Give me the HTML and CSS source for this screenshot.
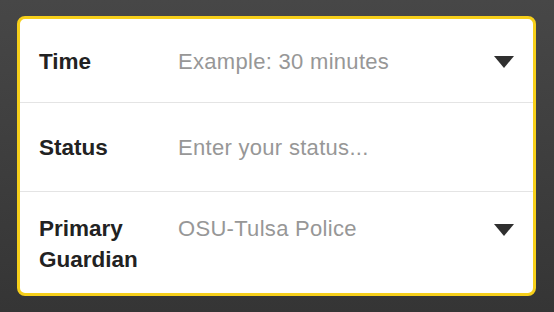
FILE: index.html
```html
<!DOCTYPE html>
<html>
<head>
	<meta charset="utf-8">
	<title>Check In</title>
	<link rel="stylesheet" href="styles.css">
</head>
<body>
	<div class="screen">
		<div class="card">
			<div class="row row-time">
				<span class="label">Time</span>
				<span class="value">Example: 30 minutes</span>
				<svg class="arrow" width="20" height="12" viewBox="0 0 20 12"><polygon points="0,0 20,0 10,12" fill="#2f2f2f"/></svg>
			</div>
			<div class="row row-status">
				<span class="label">Status</span>
				<span class="value">Enter your status...</span>
			</div>
			<div class="row row-guardian">
				<span class="label">Primary<br>Guardian</span>
				<span class="value">OSU-Tulsa Police</span>
				<svg class="arrow" width="20" height="12" viewBox="0 0 20 12"><polygon points="0,0 20,0 10,12" fill="#2f2f2f"/></svg>
			</div>
		</div>
	</div>
</body>
</html>
```

FILE: styles.css
```css
html, body{
	margin: 0;
	padding: 0;
}
body{
	width: 554px;
	height: 312px;
	overflow: hidden;
	font-family: "Liberation Sans", Arial, sans-serif;
}
.screen{
	width: 554px;
	height: 312px;
	padding: 16px 0 0 17px;
	box-sizing: border-box;
	background: linear-gradient(to bottom, #474747, #353535);
}
.card{
	width: 519px;
	height: 280px;
	box-sizing: border-box;
	background: #fff;
	border: 3px solid #f6cf1a;
	border-radius: 8px;
	overflow: hidden;
}
.row{
	display: flex;
	align-items: center;
	box-sizing: border-box;
	padding: 2px 19px 0;
	border-bottom: 1px solid #e4e4e4;
	line-height: 30px;
	font-size: 22px;
}
.row-time{
	height: 84px;
}
.row-status{
	height: 89px;
}
.row-guardian{
	border-bottom: none;
	align-items: flex-start;
	padding-top: 21px;
	line-height: 31px;
}
.label{
	width: 139px;
	flex: none;
	font-weight: bold;
	font-size: 22.5px;
	color: #222;
}
.value{
	flex: 1;
	color: #979797;
	letter-spacing: 0.3px;
}
.arrow{
	flex: none;
	display: block;
}
.row-guardian .arrow{
	margin-top: 11px;
}
```
